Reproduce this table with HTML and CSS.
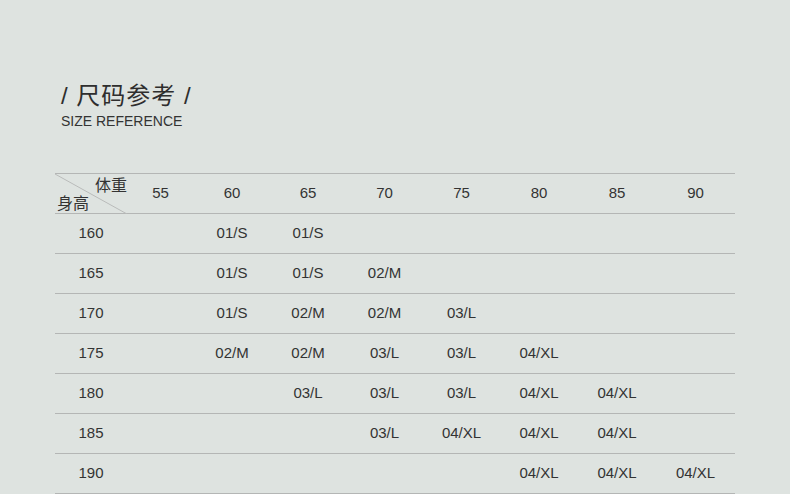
FILE: index.html
```html
<!DOCTYPE html>
<html lang="zh">
<head>
<meta charset="utf-8">
<link rel="stylesheet" href="styles.css">
</head>
<body>
<div class="page">
  <div class="heading">
    <div class="title">/ 尺码参考 /</div>
    <div class="subtitle">SIZE REFERENCE</div>
  </div>
  <table class="size-table">
    <colgroup>
      <col class="c1"><col class="c2"><col class="c3"><col class="c3"><col class="c5"><col class="c5"><col class="c7"><col class="c7"><col class="c9">
    </colgroup>
    <thead>
      <tr>
        <th class="corner">
          <svg class="diag" width="72" height="40" viewBox="0 0 72 40"><line x1="0" y1="0" x2="72" y2="40" stroke="#b9bbba" stroke-width="1"/></svg>
          <span class="w">体重</span>
          <span class="h">身高</span>
        </th>
        <th>55</th><th>60</th><th>65</th><th>70</th><th>75</th><th>80</th><th>85</th><th>90</th>
      </tr>
    </thead>
    <tbody>
      <tr><td>160</td><td></td><td>01/S</td><td>01/S</td><td></td><td></td><td></td><td></td><td></td></tr>
      <tr><td>165</td><td></td><td>01/S</td><td>01/S</td><td>02/M</td><td></td><td></td><td></td><td></td></tr>
      <tr><td>170</td><td></td><td>01/S</td><td>02/M</td><td>02/M</td><td>03/L</td><td></td><td></td><td></td></tr>
      <tr><td>175</td><td></td><td>02/M</td><td>02/M</td><td>03/L</td><td>03/L</td><td>04/XL</td><td></td><td></td></tr>
      <tr><td>180</td><td></td><td></td><td>03/L</td><td>03/L</td><td>03/L</td><td>04/XL</td><td>04/XL</td><td></td></tr>
      <tr><td>185</td><td></td><td></td><td></td><td>03/L</td><td>04/XL</td><td>04/XL</td><td>04/XL</td><td></td></tr>
      <tr><td>190</td><td></td><td></td><td></td><td></td><td></td><td>04/XL</td><td>04/XL</td><td>04/XL</td></tr>
    </tbody>
  </table>
</div>
</body>
</html>
```
FILE: styles.css
```css
html, body {
  margin: 0;
  padding: 0;
  background: #dee3e0;
}
.page {
  width: 790px;
  height: 494px;
  overflow: hidden;
  padding: 80px 0 0 55px;
  box-sizing: border-box;
  font-family: "Liberation Sans", Arial, "Noto Sans CJK SC", sans-serif;
  color: #333;
}
.heading {
  padding-left: 6px;
  height: 93px;
}
.title {
  font-size: 24px;
  line-height: 32px;
  letter-spacing: 1px;
  color: #2e2e2e;
}
.subtitle {
  font-size: 14px;
  line-height: 18px;
  margin-top: 0;
  color: #333;
}
.size-table {
  border-collapse: collapse;
  table-layout: fixed;
  width: 680px;
  font-size: 15px;
}
.c1 { width: 72px; }
.c2 { width: 67px; }
.c3 { width: 76px; }
.c5 { width: 77px; }
.c7 { width: 78px; }
.c9 { width: 79px; }
.size-table th,
.size-table td {
  height: 37px;
  padding: 0 0 2px 0;
  text-align: center;
  font-weight: normal;
  border-top: 1px solid #b4b6b5;
  border-bottom: 1px solid #b4b6b5;
}
.corner {
  position: relative;
}
.diag {
  position: absolute;
  left: 0;
  top: 0;
  display: block;
}
.corner .w {
  position: absolute;
  left: 40px;
  top: -2px;
  font-size: 16px;
}
.corner .h {
  position: absolute;
  left: 2px;
  top: 16px;
  font-size: 16px;
}
```
